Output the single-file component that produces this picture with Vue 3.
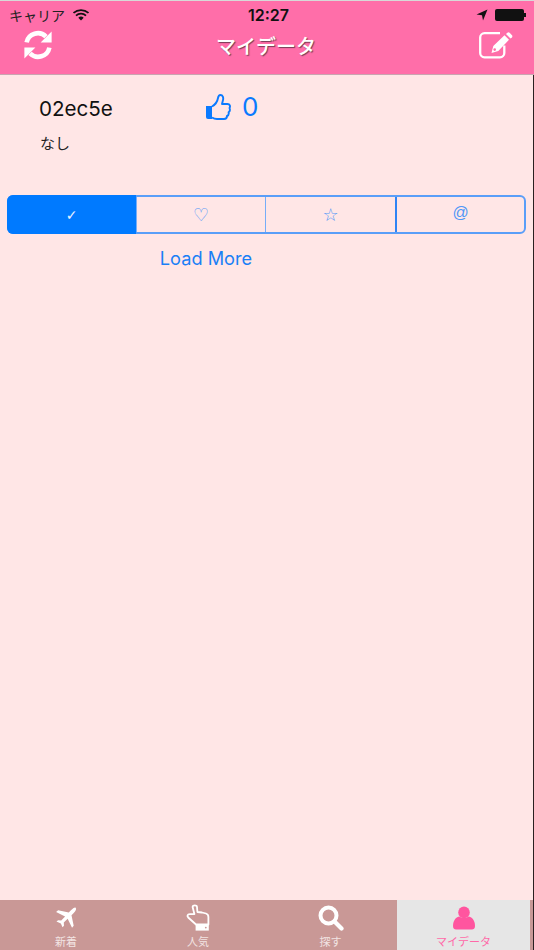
<script setup>
const segments = [
  { glyph: '✓', active: true },
  { glyph: '♡', large: true },
  { glyph: '☆', large: true },
  { glyph: '@', strong: true },
]
</script>

<template>
  <div class="screen">
    <header class="nav">
      <div class="status">
        <div class="status-left">
          <span class="carrier">キャリア</span>
          <svg class="wifi" viewBox="0 0 16 12" width="16" height="12">
            <path d="M0.5 4 A11 11 0 0 1 15.5 4" fill="none" stroke="#111" stroke-width="1.7" />
            <path d="M3 6.6 A7.3 7.3 0 0 1 13 6.6" fill="none" stroke="#111" stroke-width="1.7" />
            <path d="M5.3 8.8 A4 4 0 0 1 10.7 8.8 L8 11.6 Z" fill="#111" />
          </svg>
        </div>
        <span class="clock">12:27</span>
        <div class="status-right">
          <svg viewBox="0 0 12 12" width="12" height="12">
            <path d="M11.5 0.5 L0.5 5.5 L6 6.2 L7 11.5 Z" fill="#111" />
          </svg>
          <div class="battery"></div>
          <div class="battery-tip"></div>
        </div>
      </div>
      <div class="nav-row">
        <svg viewBox="0 0 30 30" width="30" height="30">
          <path d="M3.6 12.4 A11.5 11.5 0 0 1 23 6.6" fill="none" stroke="#fff" stroke-width="4.6" />
          <path d="M28.6 1.6 V12.6 H17.6 Z" fill="#fff" />
          <path d="M26.4 17.6 A11.5 11.5 0 0 1 7 23.4" fill="none" stroke="#fff" stroke-width="4.6" />
          <path d="M1.4 28.4 V17.4 H12.4 Z" fill="#fff" />
        </svg>
        <h1 class="title">マイデータ</h1>
        <svg viewBox="0 0 34 27" width="34" height="27">
          <path d="M21 1.2 H5.5 A4.3 4.3 0 0 0 1.2 5.5 V21 A4.3 4.3 0 0 0 5.5 25.3 H21 A4.3 4.3 0 0 0 25.3 21 V13.5" fill="none" stroke="#fff" stroke-width="2.3" />
          <path d="M12.5 21 L14.3 14 L25.5 3.3 L30 7.8 L19.3 19 Z" fill="#fff" />
          <path d="M27 2 L28.4 0.7 Q29.5 0 30.6 0.8 L33 3.2 Q33.8 4.3 33 5.4 L31.5 6.6 Z" fill="#fff" />
          <circle cx="15.7" cy="17.6" r="1.3" fill="#ff6ea9" />
        </svg>
      </div>
    </header>

    <main class="content">
      <div class="profile">
        <span class="user-id">02ec5e</span>
        <div class="likes">
          <svg viewBox="0 0 26 26" width="26" height="26">
            <path d="M1 12 H7 V25 H3 A2 2 0 0 1 1 23 Z" fill="#0a7aff" />
            <path d="M7 12.5 C10.5 10.5 12.5 7 13 4 C13.3 2 14 1 15.5 1 C17.8 1 18.6 3.6 18 6 L17 10 H22.5 C25 10 25.5 12.5 24.5 14 C25.3 16 24.8 17.5 23.6 18.3 C24 20 23.3 21.5 22 22 C22 24 21 25 19 25 H12 C10 25 8.5 24.5 7 23.5"
              fill="none" stroke="#0a7aff" stroke-width="1.9" stroke-linejoin="round" />
          </svg>
          <span class="like-count">0</span>
        </div>
      </div>
      <p class="memo">なし</p>

      <div class="segments">
        <div
          v-for="segment in segments"
          :key="segment.glyph"
          class="segment"
          :class="{ active: segment.active, strong: segment.strong, large: segment.large }"
        >{{ segment.glyph }}</div>
      </div>

      <div class="load-more">Load More</div>
    </main>

    <nav class="tabs">
      <div class="tab">
        <div class="tab-icon">
          <svg viewBox="0 0 24 24" width="22" height="22">
            <path d="M22.5 0.8 C23.8 2 22.6 4.4 20.4 6.6 L18 9 L20.4 20.4 L18.6 22.6 L13.8 12.8 L9.6 17 L9.8 20.4 L8.2 22.2 L6.4 18 L1.6 15.8 L3.4 14.4 L6.8 14.6 L11 10.4 L1.2 5.4 L3.4 3.6 L15 6 L17.4 3.6 C19.6 1.4 21.6 0 22.5 0.8 Z" fill="#fff" />
          </svg>
        </div>
        <span>新着</span>
      </div>
      <div class="tab">
        <div class="tab-icon">
          <svg viewBox="0 0 24 28" width="24" height="28">
            <path d="M6.6 3 C6.6 0.8 11 0.8 11 3 L11.4 8 L16 8.5 L20 9.5 C21.6 10 22.4 11.4 22.4 13 V20.5 H10 L2.2 13.5 C0.8 12 1.6 10.2 3.4 10.2 L8.4 10 Z" fill="none" stroke="#fff" stroke-width="1.8" stroke-linejoin="round" />
            <path d="M9.6 20 H22.8 V26.6 H9.6 Z" fill="#fff" />
            <circle cx="19.8" cy="23.6" r="0.9" fill="#c99896" />
          </svg>
        </div>
        <span>人気</span>
      </div>
      <div class="tab">
        <div class="tab-icon">
          <svg viewBox="0 0 26 26" width="26" height="26">
            <circle cx="10.5" cy="10.5" r="8" fill="none" stroke="#fff" stroke-width="4" />
            <path d="M16.5 16.5 L23.5 23.5" stroke="#fff" stroke-width="4.2" stroke-linecap="round" />
          </svg>
        </div>
        <span>探す</span>
      </div>
      <div class="tab current">
        <div class="tab-icon">
          <svg viewBox="0 0 22 24" width="22" height="24">
            <circle cx="11" cy="6.4" r="5.8" fill="#ff559f" />
            <path d="M0 20 C0 14 3.5 11 6.5 10.6 C8 12.4 14 12.4 15.5 10.6 C18.5 11 22 14 22 20 C22 22.6 20.5 23.4 19 23.4 H3 C1.5 23.4 0 22.6 0 20 Z" fill="#ff559f" />
          </svg>
        </div>
        <span>マイデータ</span>
      </div>
    </nav>
  </div>
</template>

<style>
html, body { margin: 0; padding: 0; }
</style>

<style scoped>
.screen {
  width: 534px;
  height: 950px;
  display: flex;
  flex-direction: column;
  overflow: hidden;
  background: #ffe6e6;
  font-family: "Liberation Sans", "Noto Sans CJK JP", sans-serif;
}
.nav {
  height: 73px;
  flex: none;
  background: #ff6ea9;
  border-top: 1px solid #d8d8d8;
  border-bottom: 1px solid #c9a4b0;
}
.status {
  height: 28px;
  padding: 0 9px;
  display: grid;
  grid-template-columns: 1fr auto 1fr;
  align-items: center;
  color: #111;
}
.status-left { display: flex; align-items: center; gap: 8px; }
.carrier { font-size: 14px; color: #222; }
.clock { margin-left: 3px; font-size: 16px; font-family: "Inter", "Liberation Sans", sans-serif; font-weight: 600; }
.status-right { display: flex; justify-content: flex-end; align-items: center; }
.battery { width: 29px; height: 12px; margin-left: 7px; background: #111; border-radius: 2px; }
.battery-tip { width: 2px; height: 4px; background: #111; margin-right: -1px; }
.nav-row {
  height: 32px;
  padding: 0 21px 12px 23px;
  display: flex;
  align-items: center;
  justify-content: space-between;
}
.title {
  margin: 0;
  font-size: 20px;
  font-weight: 500;
  color: #fff;
  text-shadow: 1px 1px 1px rgba(60, 40, 50, 0.7);
}
.content {
  flex: 1;
  min-height: 0;
  padding: 0 7px 0 7px;
  border-right: 1px solid #2a2020;
}
.profile {
  display: flex;
  align-items: center;
  height: 26px;
  margin-top: 20px;
  padding-left: 32px;
}
.user-id {
  width: 166px;
  font-size: 20.6px;
  font-family: "Inter", "Liberation Sans", sans-serif;
  color: #111;
}
.likes { display: flex; align-items: center; gap: 11px; margin-top: -3px; }
.like-count { font-size: 26px; color: #0a7aff; font-family: "Inter", "Liberation Sans", sans-serif; }
.memo { margin: 12px 0 0 33px; font-size: 15px; line-height: 22px; color: #222; }
.segments {
  display: grid;
  grid-template-columns: 127px 129px 130px 129px;
  width: 519px;
  height: 39px;
  margin-top: 40px;
  box-sizing: border-box;
  border: 2px solid #5a9ef8;
  border-radius: 6px;
}
.segment {
  display: flex;
  align-items: center;
  justify-content: center;
  border-left: 1px solid #76adf8;
  font-size: 16px;
  font-family: "Liberation Sans", sans-serif;
  color: #4f97f7;
}
.segment:first-child { border-left: 0; }
.segment.large { font-size: 18px; font-family: "DejaVu Sans", sans-serif; }
.segment.strong { border-left: 2px solid #2f84f4; padding-bottom: 3px; box-sizing: border-box; }
.segment.active {
  margin: -2px 0 -2px -2px;
  background: #007aff;
  color: #e8f2ff;
  border-radius: 6px 0 0 6px;
  font-family: "DejaVu Sans", sans-serif;
  font-size: 14px;
}
.load-more {
  width: 398px;
  margin-top: 12px;
  text-align: center;
  font-size: 18.2px;
  line-height: 24px;
  color: #1a7ff6;
  font-family: "Inter", "Liberation Sans", sans-serif;
}
.tabs {
  height: 50px;
  flex: none;
  display: grid;
  grid-template-columns: 132px 132px 133px 133px 1fr;
  background: #c99896;
  border-right: 1px solid #2a2020;
}
.tab {
  display: flex;
  flex-direction: column;
  align-items: center;
  color: #f2e4e3;
  font-size: 11px;
  line-height: 13px;
}
.tab-icon {
  height: 36px;
  display: flex;
  align-items: center;
  justify-content: center;
}
.tab.current { background: #e6e6e6; color: #ff69a8; }
</style>
